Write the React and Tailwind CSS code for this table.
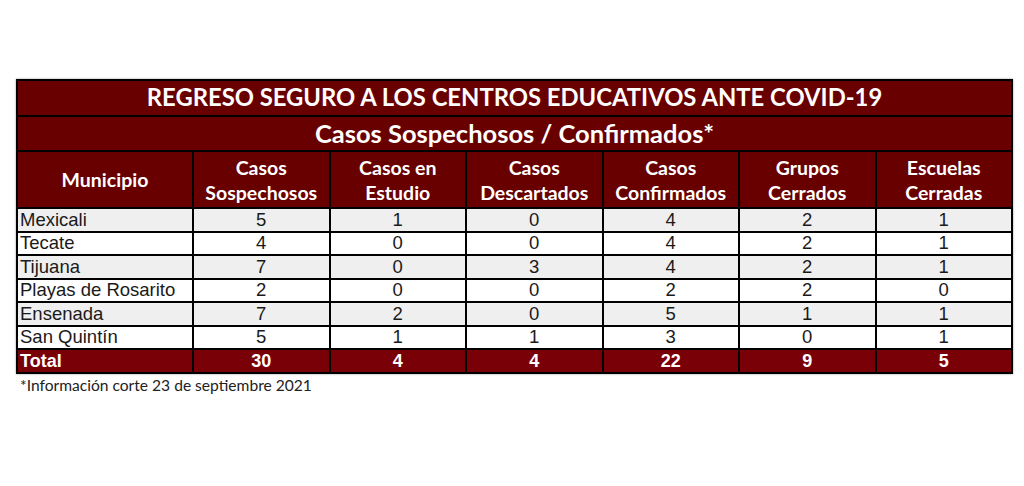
import React from "react";

const rows = [
  ["Mexicali", 5, 1, 0, 4, 2, 1],
  ["Tecate", 4, 0, 0, 4, 2, 1],
  ["Tijuana", 7, 0, 3, 4, 2, 1],
  ["Playas de Rosarito", 2, 0, 0, 2, 2, 0],
  ["Ensenada", 7, 2, 0, 5, 1, 1],
  ["San Quintín", 5, 1, 1, 3, 0, 1],
];
const totals = ["Total", 30, 4, 4, 22, 9, 5];
const headers = [
  ["Municipio"],
  ["Casos", "Sospechosos"],
  ["Casos en", "Estudio"],
  ["Casos", "Descartados"],
  ["Casos", "Confirmados"],
  ["Grupos", "Cerrados"],
  ["Escuelas", "Cerradas"],
];

export default function App() {
  return (
    <div className="w-[1024px] h-[486px] bg-white pt-[79px] pl-[16px]" style={{ fontFamily: "Lato, 'Open Sans', sans-serif" }}>
      <div className="w-[997px] bg-black p-[2px] shadow-[0_0_2px_rgba(0,0,0,0.4)]">
        <div className="grid grid-cols-[174px_repeat(6,1fr)] gap-[2px]">
          <div className="col-span-7 h-[34px] bg-[#680000] text-white font-bold text-[23.8px] flex items-center justify-center leading-none">
            REGRESO SEGURO A LOS CENTROS EDUCATIVOS ANTE COVID-19
          </div>
          <div className="col-span-7 h-[33px] bg-[#680000] text-white font-bold text-[25.5px] flex items-center justify-center leading-none">
            Casos Sospechosos / Confirmados*
          </div>
          {headers.map((h, i) => (
            <div key={i} className="h-[55px] bg-[#680000] text-white font-bold text-[19.5px] leading-[25px] flex flex-col items-center justify-center">
              {h.map((l, j) => (
                <span key={j}>{l}</span>
              ))}
            </div>
          ))}
          {rows.map((r, ri) =>
            r.map((c, ci) => (
              <div
                key={ri + "-" + ci}
                className={
                  "h-[21.5px] flex items-center text-[18.5px] leading-none text-[#1a1a1a] " +
                  (ci === 0 ? "justify-start pl-[2px] " : "justify-center ") +
                  (ri % 2 === 0 ? "bg-[#efefef]" : "bg-white")
                }
                style={{ fontFamily: "'Liberation Sans', Arial, sans-serif" }}
              >
                {c}
              </div>
            ))
          )}
          {totals.map((c, ci) => (
            <div
              key={"t" + ci}
              className={
                "h-[22px] flex items-center bg-[#7a0008] text-white font-bold text-[18px] leading-none " +
                (ci === 0 ? "justify-start pl-[2px]" : "justify-center")
              }
              style={{ fontFamily: "'Liberation Sans', Arial, sans-serif" }}
            >
              {c}
            </div>
          ))}
        </div>
      </div>
      <div className="pt-[1px] pl-[4px] text-[15.6px] text-[#222] leading-[20px]">
        *Información corte 23 de septiembre 2021
      </div>
    </div>
  );
}
